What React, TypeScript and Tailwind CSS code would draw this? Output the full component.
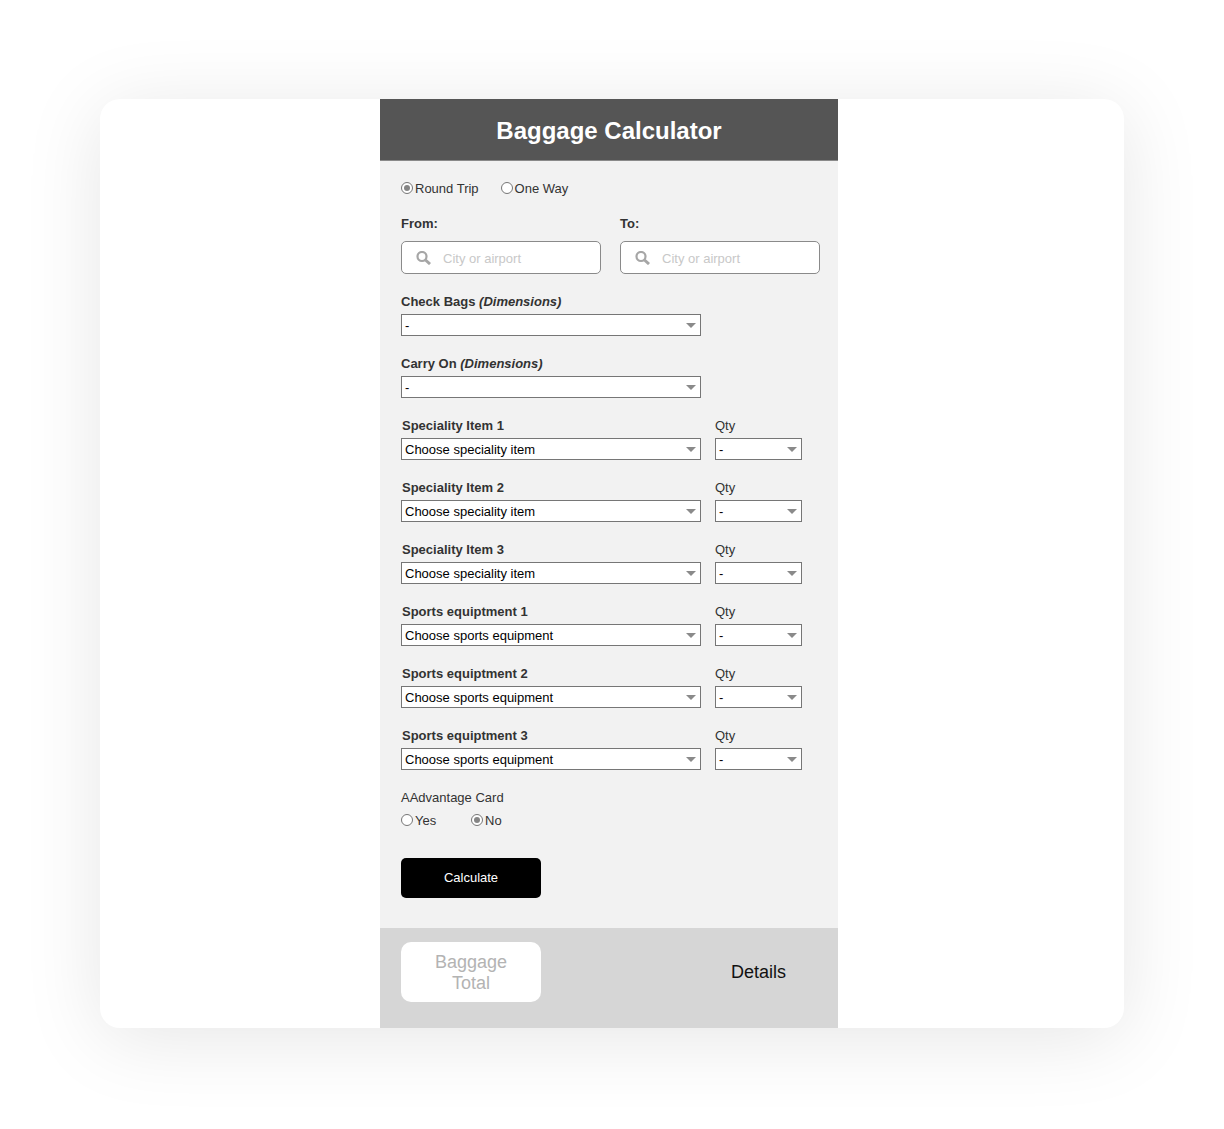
import React from 'react';

const Radio = ({ checked, label }: { checked?: boolean; label: string }) => (
  <div className="flex items-center">
    <span className="flex h-3 w-3 items-center justify-center rounded-full border border-[#767676] bg-white">
      {checked && <span className="h-[6px] w-[6px] rounded-full bg-[#858585]" />}
    </span>
    <span className="ml-[2px] block h-4 text-[13px] leading-[18px] text-[#333333]">{label}</span>
  </div>
);

const SelectBox = ({ value, wide }: { value: string; wide?: boolean }) => (
  <div className={`flex h-[22px] items-center justify-between border border-[#767676] bg-white pl-[3px] pr-[4px] ${wide ? 'w-[300px]' : 'w-[87px]'}`}>
    <span className="block h-4 text-[13px] leading-[18px] text-black">{value}</span>
    <svg width="10" height="5" viewBox="0 0 10 5">
      <path d="M0 0H10L5 5Z" fill="#8a8a8a" />
    </svg>
  </div>
);

const SearchField = () => (
  <div className="flex h-[33px] w-[200px] items-center rounded-[5px] border border-[#8a8a8a] bg-white pl-[14px]">
    <svg width="15" height="14" viewBox="0 0 15 14" fill="none" stroke="#a6a6a6">
      <circle cx="6" cy="5.5" r="4.5" strokeWidth="2.2" />
      <path d="M9.5 9L14 13" strokeWidth="3" />
    </svg>
    <span className="ml-[12px] block h-4 text-[13px] leading-[18px] text-[#c8c8c8]">City or airport</span>
  </div>
);

const ItemRow = ({ label, value }: { label: string; value: string }) => (
  <div className="mb-[19px] flex">
    <div className="w-[300px]">
      <div className="h-4 pl-px text-[13px] font-bold leading-[18px] text-[#333333]">{label}</div>
      <div className="mt-[5px]"><SelectBox value={value} wide /></div>
    </div>
    <div className="ml-[14px]">
      <div className="h-4 text-[13px] leading-[18px] text-[#333333]">Qty</div>
      <div className="mt-[5px]"><SelectBox value="-" /></div>
    </div>
  </div>
);

const DimensionRow = ({ label }: { label: string }) => (
  <div className="mb-[19px]">
    <div className="h-4 text-[13px] font-bold leading-[18px] text-[#333333]">
      {label} <em>(Dimensions)</em>
    </div>
    <div className="mt-[5px]"><SelectBox value="-" wide /></div>
  </div>
);

const items = [
  ['Speciality Item 1', 'Choose speciality item'],
  ['Speciality Item 2', 'Choose speciality item'],
  ['Speciality Item 3', 'Choose speciality item'],
  ['Sports equiptment 1', 'Choose sports equipment'],
  ['Sports equiptment 2', 'Choose sports equipment'],
  ['Sports equiptment 3', 'Choose sports equipment'],
];

export default function App() {
  return (
    <div className="min-h-[1129px] bg-white pt-[99px] font-['Liberation_Sans',Arial,sans-serif]">
      <div className="mx-auto flex h-[929px] w-[1024px] rounded-[20px] bg-white pl-[280px] shadow-[0_10px_80px_rgba(0,0,0,0.1)]">
        <div className="flex w-[458px] flex-col">
          {/* Header */}
          <div className="flex h-[62px] items-center justify-center border-b border-[#8a8a8a] bg-[#555555] pt-[3px]">
            <h1 className="text-[24px] font-bold leading-7 text-white">Baggage Calculator</h1>
          </div>

          {/* Form */}
          <div className="flex-1 bg-[#f2f2f2] pl-[21px] pt-[19px]">
            <div className="flex h-4 gap-[22px]">
              <Radio checked label="Round Trip" />
              <Radio label="One Way" />
            </div>

            <div className="mt-[19px] flex gap-[19px]">
              <div>
                <div className="h-4 text-[13px] font-bold leading-[18px] text-[#333333]">From:</div>
                <div className="mt-[10px]"><SearchField /></div>
              </div>
              <div>
                <div className="h-4 text-[13px] font-bold leading-[18px] text-[#333333]">To:</div>
                <div className="mt-[10px]"><SearchField /></div>
              </div>
            </div>

            <div className="mt-[19px]">
              <DimensionRow label="Check Bags" />
              <DimensionRow label="Carry On" />
              {items.map(([label, value]) => (
                <ItemRow key={label} label={label} value={value} />
              ))}
            </div>

            <div className="h-4 text-[13px] leading-[18px] text-[#333333]">AAdvantage Card</div>
            <div className="mt-[7px] flex h-4">
              <div className="w-[70px]"><Radio label="Yes" /></div>
              <Radio checked label="No" />
            </div>

            <button className="mt-[30px] flex h-[40px] w-[140px] items-center justify-center rounded-[5px] bg-black text-[13px] text-white">
              Calculate
            </button>
          </div>

          {/* Footer */}
          <div className="flex h-[100px] items-start bg-[#d6d6d6] pl-[21px] pt-[14px]">
            <div className="flex h-[60px] w-[140px] items-center justify-center rounded-[10px] bg-white pt-px text-center text-[18px] leading-[21px] text-[#b3b3b3]">
              Baggage<br />Total
            </div>
            <div className="ml-[190px] flex h-[60px] items-center text-[18px] text-[#111111]">Details</div>
          </div>
        </div>
      </div>
    </div>
  );
}
